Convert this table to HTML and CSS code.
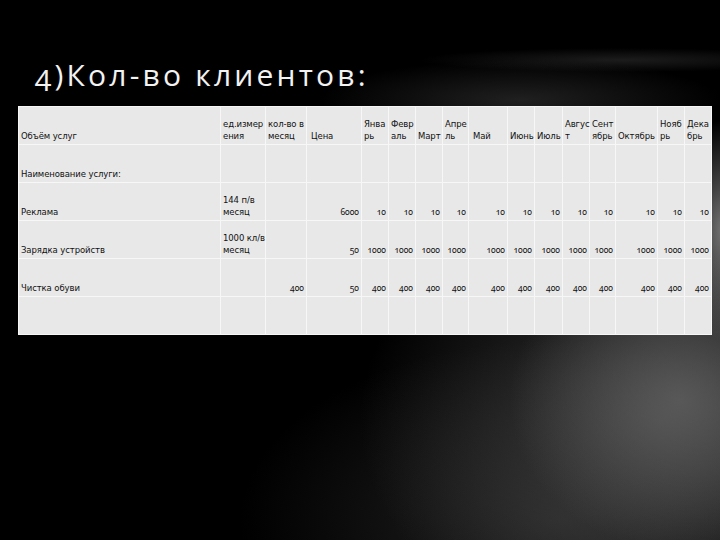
FILE: index.html
```html
<!DOCTYPE html>
<html lang="ru">
<head>
<meta charset="utf-8">
<title>4)Кол-во клиентов</title>
<link rel="stylesheet" href="styles.css">
</head>
<body>
<div class="slide">
  <h1 class="title">4)Кол-во клиентов:</h1>
  <table class="grid">
    <colgroup>
      <col class="c-name"><col class="c-unit"><col class="c-qty"><col class="c-price">
      <col class="c-m"><col class="c-m"><col class="c-m"><col class="c-m2">
      <col class="c-may"><col class="c-m"><col class="c-m3"><col class="c-m">
      <col class="c-m2"><col class="c-oct"><col class="c-m"><col class="c-m">
    </colgroup>
    <tr>
      <td>Объём услуг</td>
      <td>ед.измер<br>ения</td>
      <td>кол-во в<br>месяц</td>
      <td class="pad">Цена</td>
      <td>Янва<br>рь</td>
      <td>Февр<br>аль</td>
      <td>Март</td>
      <td>Апре<br>ль</td>
      <td class="pad">Май</td>
      <td>Июнь</td>
      <td>Июль</td>
      <td>Авгус<br>т</td>
      <td>Сент<br>ябрь</td>
      <td>Октябрь</td>
      <td>Нояб<br>рь</td>
      <td>Дека<br>брь</td>
    </tr>
    <tr>
      <td>Наименование услуги:</td>
      <td></td><td></td><td></td>
      <td></td><td></td><td></td><td></td><td></td><td></td>
      <td></td><td></td><td></td><td></td><td></td><td></td>
    </tr>
    <tr>
      <td>Реклама</td>
      <td>144 п/в<br>месяц</td>
      <td></td>
      <td class="n">6000</td>
      <td class="n">10</td><td class="n">10</td><td class="n">10</td><td class="n">10</td>
      <td class="n">10</td><td class="n">10</td><td class="n">10</td><td class="n">10</td>
      <td class="n">10</td><td class="n">10</td><td class="n">10</td><td class="n">10</td>
    </tr>
    <tr>
      <td>Зарядка устройств</td>
      <td>1000 кл/в<br>месяц</td>
      <td></td>
      <td class="n">50</td>
      <td class="n">1000</td><td class="n">1000</td><td class="n">1000</td><td class="n">1000</td>
      <td class="n">1000</td><td class="n">1000</td><td class="n">1000</td><td class="n">1000</td>
      <td class="n">1000</td><td class="n">1000</td><td class="n">1000</td><td class="n">1000</td>
    </tr>
    <tr>
      <td>Чистка обуви</td>
      <td></td>
      <td class="n">400</td>
      <td class="n">50</td>
      <td class="n">400</td><td class="n">400</td><td class="n">400</td><td class="n">400</td>
      <td class="n">400</td><td class="n">400</td><td class="n">400</td><td class="n">400</td>
      <td class="n">400</td><td class="n">400</td><td class="n">400</td><td class="n">400</td>
    </tr>
    <tr>
      <td></td><td></td><td></td><td></td>
      <td></td><td></td><td></td><td></td><td></td><td></td>
      <td></td><td></td><td></td><td></td><td></td><td></td>
    </tr>
  </table>
</div>
</body>
</html>
```

FILE: styles.css
```css
html, body {
  margin: 0;
  padding: 0;
}

body {
  width: 720px;
  height: 540px;
  overflow: hidden;
  background-color: #000;
}

.slide {
  width: 720px;
  height: 540px;
  box-sizing: border-box;
  padding-top: 57px;
  background:
    radial-gradient(ellipse 40px 110px at 722px 230px, rgba(150,150,150,0.75), rgba(150,150,150,0) 100%),
    radial-gradient(ellipse 170px 150px at 680px 400px, rgba(96,96,96,0.8), rgba(96,96,96,0) 100%),
    radial-gradient(ellipse 300px 230px at 660px 420px, rgba(70,70,70,0.85), rgba(70,70,70,0) 100%),
    radial-gradient(ellipse 320px 180px at 560px 520px, rgba(45,45,45,0.8), rgba(45,45,45,0) 100%),
    radial-gradient(ellipse 200px 40px at 520px 100px, rgba(45,45,45,0.7), rgba(45,45,45,0) 100%),
    radial-gradient(ellipse 200px 12px at 620px 60px, rgba(40,40,40,0.7), rgba(40,40,40,0) 100%),
    #000;
}

.title {
  margin: 0 0 13px 35px;
  font-family: "Open Sans", "DejaVu Sans", sans-serif;
  font-weight: 400;
  font-size: 30px;
  line-height: 36px;
  color: #f2f2f2;
  letter-spacing: 3.2px;
  font-variant-numeric: oldstyle-nums;
}

.grid {
  margin-left: 18px;
  width: 693px;
  table-layout: fixed;
  border-collapse: collapse;
  background: #e8e8e8;
  font-family: "DejaVu Sans", "Noto Sans", sans-serif;
  font-size: 8.5px;
  line-height: 12px;
  color: #111;
  letter-spacing: -0.1px;
}

.grid td {
  height: 35px;
  padding: 0 1px 2px 2px;
  border: 1px solid #f7f7f7;
  vertical-align: bottom;
  white-space: nowrap;
  overflow: visible;
}

.grid td.n {
  text-align: right;
  padding-right: 2px;
  font-family: "Noto Sans", "DejaVu Sans", sans-serif;
  font-variant-numeric: oldstyle-nums;
  letter-spacing: 0;
}

.grid td.pad {
  padding-left: 4px;
}

.c-name { width: 202px; }
.c-unit { width: 45px; }
.c-qty { width: 41px; }
.c-price { width: 55px; }
.c-m { width: 27px; }
.c-m2 { width: 26px; }
.c-m3 { width: 28px; }
.c-may { width: 39px; }
.c-oct { width: 42px; }
```
